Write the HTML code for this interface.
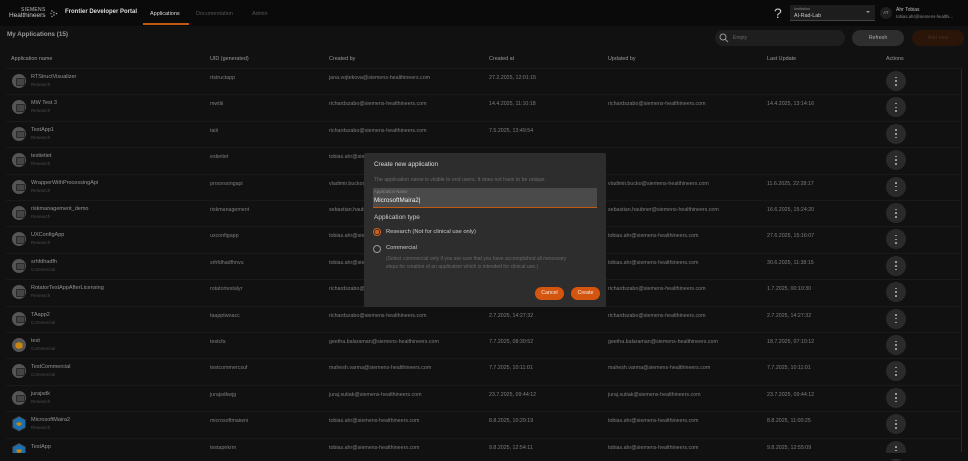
<!DOCTYPE html>
<html><head><meta charset="utf-8">
<style>
*{box-sizing:border-box;margin:0;padding:0}
body{width:968px;height:459px;background:#111;overflow:hidden;position:relative;font-family:"Liberation Sans",sans-serif;color:#8a8a8a}
.a{position:absolute;white-space:nowrap}
.top{position:absolute;left:0;top:0;width:968px;height:26px;background:#0a0a0a}
.c{font-size:5.3px;color:#7e7e7e}
.nm{font-size:5.5px;color:#949494}
.sub{font-size:4.5px;color:#4a4a4a}
.hd{font-size:5.4px;color:#999}
.line{position:absolute;left:6px;width:955px;height:1px;background:#1a1a1a}
.ic{position:absolute;left:12px;width:14px;height:14px;border-radius:50%;background:#555}
.ic:after{content:"";position:absolute;left:3.5px;top:4px;width:7px;height:5.5px;border:1.2px solid #2a2a2a;border-radius:1px;background:#444}
.act{position:absolute;left:886px;width:20px;height:20px;border-radius:50%;background:#2a2a2a}
.act i{position:absolute;left:9.3px;width:1.5px;height:1.5px;background:#aaa;border-radius:50%}
</style></head><body>
<div class="top"></div>
<div class="a" style="left:21px;top:7px;font-size:5px;color:#bbb;letter-spacing:.3px">SIEMENS</div>
<div class="a" style="left:9px;top:12px;font-size:6.5px;color:#ccc">Healthineers</div>
<svg class="a" style="left:50px;top:9px" width="9" height="9"><g fill="#aaa"><circle cx="2" cy="2" r=".7"/><circle cx="4" cy="3.5" r=".7"/><circle cx="6.5" cy="4.5" r=".8"/><circle cx="4" cy="6" r=".7"/><circle cx="2" cy="7.5" r=".7"/><circle cx="1" cy="4.5" r=".6"/></g></svg>
<div class="a" style="left:65px;top:9px;font-size:6px;color:#ddd;font-weight:bold">Frontier Developer Portal</div>
<div class="a" style="left:150px;top:11px;font-size:5.5px;color:#ddd">Applications</div>
<div class="a" style="left:143px;top:23px;width:46px;height:1.5px;background:#c15a10"></div>
<div class="a" style="left:196px;top:11px;font-size:5.5px;color:#555">Documentation</div>
<div class="a" style="left:252px;top:11px;font-size:5.5px;color:#555">Admin</div>
<div class="a" style="left:774px;top:5px;font-size:14px;color:#ccc">?</div>
<div class="a" style="left:790px;top:5px;width:85px;height:16px;background:#1d1d1d;border-bottom:1px solid #444"></div>
<div class="a" style="left:794px;top:7px;font-size:3.8px;color:#888">Institution</div>
<div class="a" style="left:794px;top:13px;font-size:5.3px;color:#ccc">AI-Rad-Lab</div>
<div class="a" style="left:866px;top:11px;width:0;height:0;border-left:2px solid transparent;border-right:2px solid transparent;border-top:2px solid #999"></div>
<div class="a" style="left:880px;top:7px;width:12px;height:12px;border-radius:50%;background:#1e1e1e;font-size:4.5px;color:#999;text-align:center;line-height:12px">AT</div>
<div class="a" style="left:896px;top:7px;font-size:5px;color:#bbb">Ahr Tobias</div>
<div class="a" style="left:896px;top:14px;font-size:4.3px;color:#888">tobias.ahr@siemens-healthi...</div>

<div class="a" style="left:7px;top:31px;font-size:6.3px;color:#999;font-weight:bold">My Applications (15)</div>
<div class="a" style="left:715px;top:30px;width:130px;height:16px;border-radius:8px;background:#1e1e1e"></div>
<svg class="a" style="left:719px;top:33px" width="10" height="10"><circle cx="4" cy="4" r="3" fill="none" stroke="#999" stroke-width="1"/><line x1="6.2" y1="6.2" x2="9" y2="9" stroke="#999" stroke-width="1"/></svg>
<div class="a" style="left:733px;top:35px;font-size:5px;color:#666">Empty</div>
<div class="a" style="left:852px;top:30px;width:52px;height:16px;border-radius:8px;background:#2e2e2e;font-size:5.3px;color:#aaa;text-align:center;line-height:16px">Refresh</div>
<div class="a" style="left:912px;top:30px;width:52px;height:16px;border-radius:8px;background:#2a1508;font-size:5.3px;color:#4a3020;text-align:center;line-height:16px">Add new</div>

<div class="a hd" style="left:11px;top:56px">Application name</div>
<div class="a hd" style="left:210px;top:56px">UID (generated)</div>
<div class="a hd" style="left:329px;top:56px">Created by</div>
<div class="a hd" style="left:489px;top:56px">Created at</div>
<div class="a hd" style="left:608px;top:56px">Updated by</div>
<div class="a hd" style="left:767px;top:56px">Last Update</div>
<div class="a hd" style="left:886px;top:56px">Actions</div>
<div class="a" style="left:961px;top:69px;width:1px;height:383px;background:#2a2a2a"></div>

<div id="rows"></div>
<script>
var R=[
["RTStructVisualizer","Research","rtstructapp","jana.vojtekova@siemens-healthineers.com","27.2.2025, 12:01:15","","",0],
["MW Test 3","Research","mwtiii","richardszabo@siemens-healthineers.com","14.4.2025, 11:10:18","richardszabo@siemens-healthineers.com","14.4.2025, 13:14:16",0],
["TestApp1","Research","taiii","richardszabo@siemens-healthineers.com","7.5.2025, 13:49:54","","",0],
["testietiet","Research","estietiet","tobias.ahr@siemens-healthineers.com","","","",0],
["WrapperWithProcessingApi","Research","processingapi","vladimir.bucko@siemens-healthineers.com","","vladimir.bucko@siemens-healthineers.com","11.6.2025, 22:28:17",0],
["riskmanagement_demo","Research","riskmanagement","sebastian.haubner@siemens-healthineers.com","","sebastian.haubner@siemens-healthineers.com","16.6.2025, 15:24:20",0],
["UXConfigApp","Research","uxconfigapp","tobias.ahr@siemens-healthineers.com","","tobias.ahr@siemens-healthineers.com","27.6.2025, 15:16:07",0],
["srhfdhadfh","Commercial","srhfdhadfhnvu","tobias.ahr@siemens-healthineers.com","","tobias.ahr@siemens-healthineers.com","30.6.2025, 11:38:15",0],
["RotatorTestAppAfterLicensing","Research","rotatortestalyr","richardszabo@siemens-healthineers.com","","richardszabo@siemens-healthineers.com","1.7.2025, 00:10:30",0],
["TAapp2","Commercial","taapptwoacc","richardszabo@siemens-healthineers.com","2.7.2025, 14:27:32","richardszabo@siemens-healthineers.com","2.7.2025, 14:27:32",0],
["test","Commercial","testcfa","geetha.balaraman@siemens-healthineers.com","7.7.2025, 08:30:52","geetha.balaraman@siemens-healthineers.com","18.7.2025, 07:10:12",1],
["TestCommercial","Commercial","testcommercsuf","mahesh.varma@siemens-healthineers.com","7.7.2025, 10:11:01","mahesh.varma@siemens-healthineers.com","7.7.2025, 10:11:01",0],
["jurajsdk","Research","jurajsdkwjg","juraj.sutiak@siemens-healthineers.com","23.7.2025, 09:44:12","juraj.sutiak@siemens-healthineers.com","23.7.2025, 09:44:12",0],
["MicrosoftMaira2","Research","microsoftmaiwni","tobias.ahr@siemens-healthineers.com","8.8.2025, 10:29:19","tobias.ahr@siemens-healthineers.com","8.8.2025, 11:00:25",2],
["TestApp","Research","testapnkrm","tobias.ahr@siemens-healthineers.com","9.8.2025, 12:54:11","tobias.ahr@siemens-healthineers.com","9.8.2025, 12:55:09",2]];
var h="";
R.forEach(function(r,i){
 var t=68+i*26.4;
 h+='<div class="line" style="top:'+t+'px"></div>';
 var ic;
 if(r[7]==1) ic='<svg class="a" style="left:12px;top:'+(t+6)+'px" width="14" height="14"><circle cx="7" cy="7" r="7" fill="#555"/><path d="M3.5 5.5 L7 4 L10.5 5.5 L10.5 9.5 L7 11 L3.5 9.5Z" fill="#c8860f"/></svg>';
 else if(r[7]==2) ic='<svg class="a" style="left:12px;top:'+(t+5)+'px" width="14" height="16"><path d="M7 0.5 L13.3 4 L13.3 11.5 L7 15 L0.7 11.5 L0.7 4Z" fill="#1a6fb0" stroke="#444" stroke-width=".8"/><path d="M4.5 6.5 L9.5 6.5 L9.5 8.5 Q7 11.5 4.5 8.5Z" fill="#c8860f"/></svg>';
 else ic='<div class="ic" style="top:'+(t+6)+'px"></div>';
 h+=ic;
 h+='<div class="a nm" style="left:31px;top:'+(t+6)+'px">'+r[0]+'</div>';
 h+='<div class="a sub" style="left:31px;top:'+(t+14)+'px">'+r[1]+'</div>';
 h+='<div class="a c" style="left:210px;top:'+(t+7)+'px">'+r[2]+'</div>';
 h+='<div class="a c" style="left:329px;top:'+(t+7)+'px">'+r[3]+'</div>';
 h+='<div class="a c" style="left:489px;top:'+(t+7)+'px">'+r[4]+'</div>';
 h+='<div class="a c" style="left:608px;top:'+(t+7)+'px">'+r[5]+'</div>';
 h+='<div class="a c" style="left:767px;top:'+(t+7)+'px">'+r[6]+'</div>';
 h+='<div class="act" style="top:'+(t+3)+'px"><i style="top:5.5px"></i><i style="top:9.3px"></i><i style="top:13px"></i></div>';
});
document.getElementById('rows').innerHTML=h;
</script>
<div class="a" style="left:0;top:453px;width:968px;height:6px;background:#111"></div>

<div class="a" style="left:364px;top:153px;width:242px;height:154px;background:#2d2d2d;border-radius:2px"></div>
<div class="a" style="left:374px;top:161px;font-size:6.3px;color:#ddd">Create new application</div>
<div class="a" style="left:374px;top:177px;font-size:5.2px;color:#6a6a6a">The application name is visible to end users. It does not have to be unique.</div>
<div class="a" style="left:373px;top:188px;width:224px;height:20px;background:#4a4a4a;border-bottom:1px solid #c15a10"></div>
<div class="a" style="left:374px;top:189px;font-size:4.3px;color:#888">Application Name</div>
<div class="a" style="left:374px;top:197px;font-size:6.3px;color:#eee">MicrosoftMaira2|</div>
<div class="a" style="left:374px;top:214px;font-size:6.5px;color:#ccc">Application type</div>
<div class="a" style="left:373px;top:228px;width:8px;height:8px;border-radius:50%;border:1.2px solid #d4621a"></div>
<div class="a" style="left:375.3px;top:230.3px;width:3.4px;height:3.4px;border-radius:50%;background:#d4621a"></div>
<div class="a" style="left:386px;top:229px;font-size:5.8px;color:#ccc">Research (Not for clinical use only)</div>
<div class="a" style="left:373px;top:245px;width:8px;height:8px;border-radius:50%;border:1px solid #999"></div>
<div class="a" style="left:386px;top:245px;font-size:5.8px;color:#ccc">Commercial</div>
<div class="a" style="left:386px;top:255px;font-size:5px;color:#6a6a6a;line-height:8px">(Select commercial only if you are sure that you have accomplished all necessary<br>steps for creation of an application which is intended for clinical use.)</div>
<div class="a" style="left:535px;top:287px;width:29px;height:13px;border-radius:7px;background:#d4550e;font-size:5.3px;color:#eee;text-align:center;line-height:13px">Cancel</div>
<div class="a" style="left:571px;top:287px;width:29px;height:13px;border-radius:7px;background:#d4550e;font-size:5.3px;color:#eee;text-align:center;line-height:13px">Create</div>
</body></html>
